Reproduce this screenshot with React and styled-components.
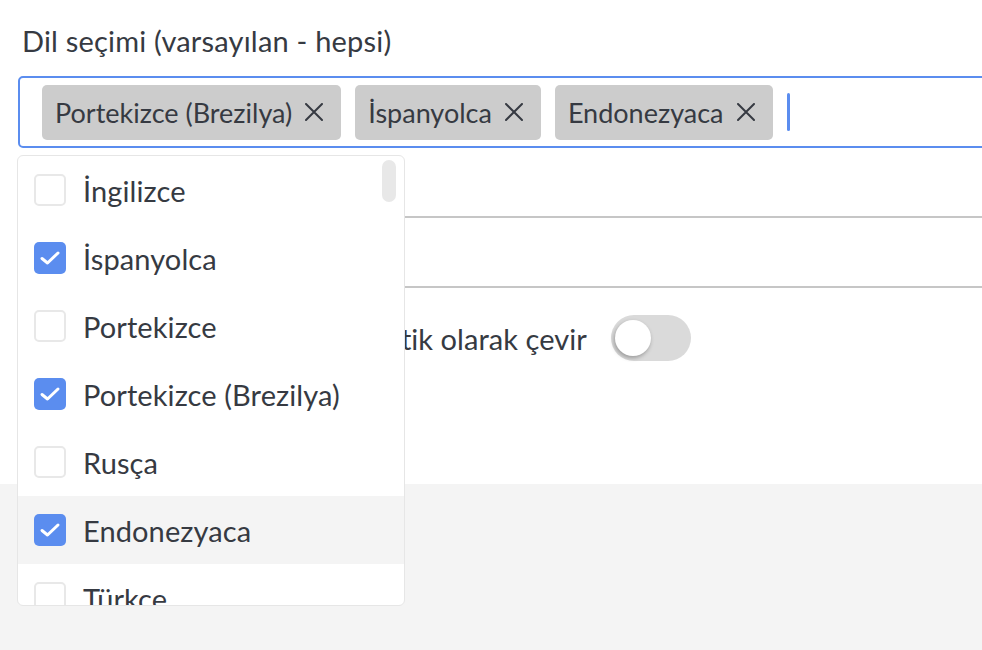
import React from "react";
import styled, { createGlobalStyle } from "styled-components";

const GlobalStyle = createGlobalStyle`
  html, body {
    margin: 0;
    height: 100%;
    overflow: hidden;
  }
  body {
    background: #f4f4f4;
    font-family: Lato, "Open Sans", sans-serif;
    color: #363a42;
  }
`;

const Page = styled.div`
  display: flex;
  flex-direction: column;
  height: 100vh;
`;

const Panel = styled.div`
  position: relative;
  z-index: 1;
  flex: none;
  background: #fff;
  height: 484px;
  box-sizing: border-box;
  padding: 24px 0 0 18px;
`;

const Footer = styled.div`
  flex: 1;
  background: #f4f4f4;
`;

const Label = styled.div`
  font-size: 29px;
  letter-spacing: 0.2px;
  line-height: 34px;
  padding-left: 4px;
  margin-bottom: 18px;
`;

const Field = styled.div`
  position: relative;
`;

const TagInput = styled.div`
  display: flex;
  align-items: center;
  gap: 14px;
  height: 72px;
  box-sizing: border-box;
  padding: 0 22px;
  width: calc(100% + 6px);
  border: 2px solid #5b8def;
  border-radius: 5px 0 0 5px;
`;

const Tag = styled.div`
  display: flex;
  align-items: center;
  gap: 13px;
  height: 55px;
  padding: 0 18px 0 13px;
  background: #cccccc;
  border-radius: 5px;
  font-size: 27px;
  white-space: nowrap;
`;

const Caret = styled.div`
  width: 3px;
  height: 38px;
  border-radius: 2px;
  background: #5b8def;
`;

const Underlined = styled.div`
  height: 70px;
  box-sizing: border-box;
  border-bottom: 2px solid #c6c6c6;
`;

const ToggleRow = styled.div`
  display: flex;
  align-items: center;
  gap: 24px;
  height: 100px;
  padding-left: 5px;
  font-size: 29px;
  letter-spacing: 0.05px;
`;

const Track = styled.div`
  position: relative;
  flex: none;
  width: 80px;
  height: 46px;
  border-radius: 23px;
  background: ${(p) => (p.$on ? "#5b8def" : "#dadada")};
`;

const Knob = styled.div`
  position: absolute;
  top: 5px;
  left: ${(p) => (p.$on ? "40px" : "4px")};
  width: 36px;
  height: 36px;
  border-radius: 50%;
  background: #fff;
  box-shadow: -1px 2px 4px rgba(0, 0, 0, 0.3);
`;

const Dropdown = styled.div`
  position: absolute;
  top: calc(100% + 7px);
  left: -1px;
  width: 388px;
  height: 451px;
  box-sizing: border-box;
  border: 1px solid #e6e6e6;
  border-radius: 6px;
  background: #fff;
  overflow: hidden;
  z-index: 2;
`;

const Thumb = styled.div`
  position: absolute;
  top: 4px;
  right: 8px;
  width: 14px;
  height: 42px;
  border-radius: 7px;
  background: #e8e8e8;
`;

const Option = styled.div`
  display: flex;
  align-items: center;
  gap: 17px;
  height: 68px;
  flex: none;
  padding-left: 16px;
  font-size: 29px;
  letter-spacing: 0.1px;
  background: ${(p) => (p.$active ? "#f4f4f4" : "transparent")};
`;

const Box = styled.div`
  display: flex;
  align-items: center;
  justify-content: center;
  width: 32px;
  height: 32px;
  box-sizing: border-box;
  border-radius: 5px;
  border: ${(p) => (p.$checked ? "none" : "2px solid #e8e8e8")};
  background: ${(p) => (p.$checked ? "#5b8def" : "#fff")};
`;

const CloseIcon = () => (
  <svg width="18" height="18" viewBox="0 0 18 18">
    <path d="M1 1L17 17M17 1L1 17" stroke="#363a42" strokeWidth="2" strokeLinecap="round" />
  </svg>
);

const CheckIcon = () => (
  <svg width="22" height="18" viewBox="0 0 22 18">
    <path d="M3 9.5L8.5 14L19 4" fill="none" stroke="#fff" strokeWidth="3" strokeLinecap="round" strokeLinejoin="round" />
  </svg>
);

const selected = ["Portekizce (Brezilya)", "İspanyolca", "Endonezyaca"];

const languages = [
  "İngilizce",
  "İspanyolca",
  "Portekizce",
  "Portekizce (Brezilya)",
  "Rusça",
  "Endonezyaca",
  "Türkçe",
];

export default function App() {
  return (
    <Page>
      <GlobalStyle />
      <Panel>
        <Label>Dil seçimi (varsayılan - hepsi)</Label>
        <Field>
          <TagInput>
            {selected.map((s) => (
              <Tag key={s}>
                {s}
                <CloseIcon />
              </Tag>
            ))}
            <Caret />
          </TagInput>
          <Dropdown>
            {languages.map((l) => (
              <Option key={l} $active={l === "Endonezyaca"}>
                <Box $checked={selected.includes(l)}>
                  {selected.includes(l) && <CheckIcon />}
                </Box>
                {l}
              </Option>
            ))}
            <Thumb />
          </Dropdown>
        </Field>
        <Underlined />
        <Underlined />
        <ToggleRow>
          <span>İçerikleri seçilen dillere otomatik olarak çevir</span>
          <Track>
            <Knob />
          </Track>
        </ToggleRow>
      </Panel>
      <Footer />
    </Page>
  );
}
